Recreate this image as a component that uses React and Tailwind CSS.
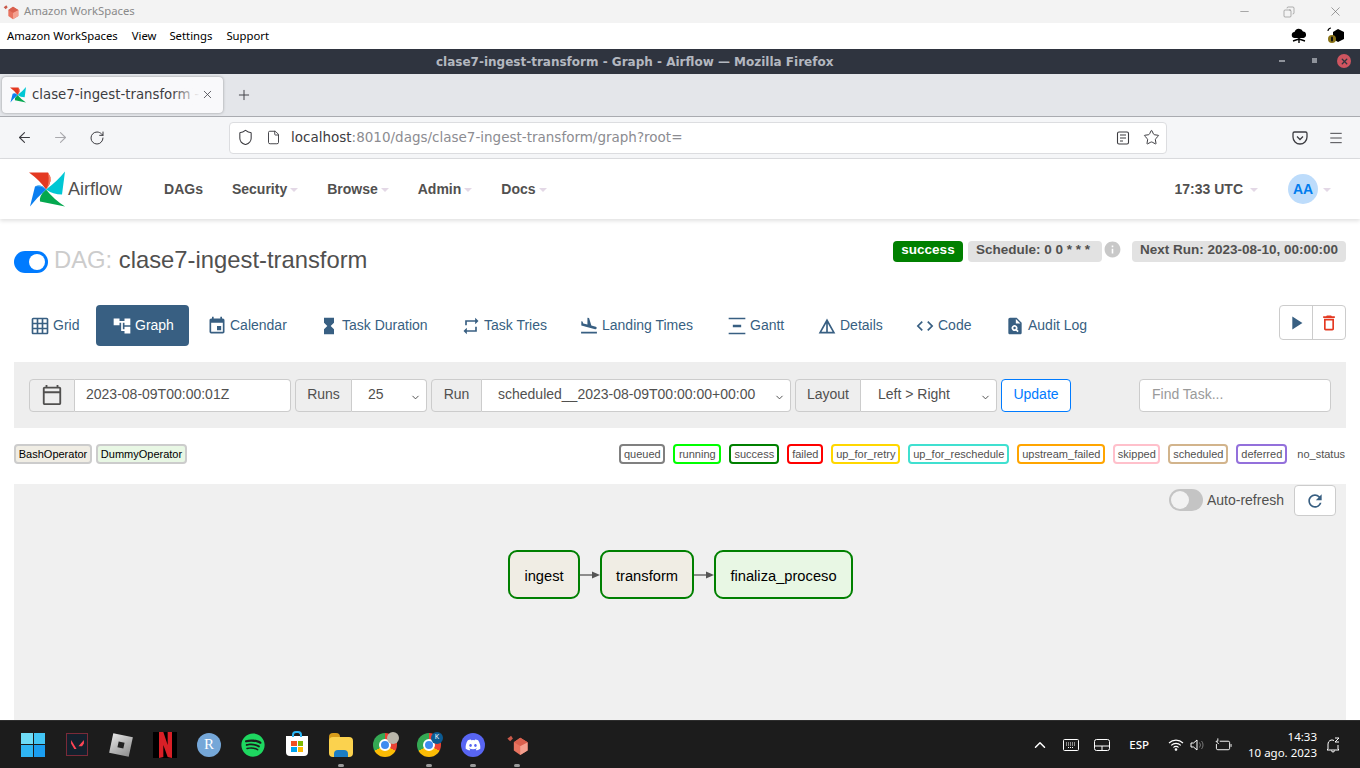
import React from 'react';
import { ArrowLeft, ArrowRight, RotateCw, Shield, File, Star, Menu, Minus, Copy, X, Plus, ChevronUp, ChevronDown } from 'lucide-react';
import {
  MdGridOn, MdAccountTree, MdEvent, MdHourglassFull, MdRepeat, MdFlightLand, MdVerticalDistribute,
  MdDetails, MdCode, MdPlagiarism, MdPlayArrow, MdDeleteOutline, MdRefresh, MdInfo, MdOutlineCalendarToday,
} from 'react-icons/md';
import { FaSpotify, FaDiscord } from 'react-icons/fa';

const Pinwheel = ({ className }) => (
  <svg viewBox="0 0 36 36" className={className}>
    <path d="M0 1 L19 1 Q25 9 17 18 Q11 9 0 1Z" fill="#e43921" />
    <path d="M19 1 Q25 9 17 18 Q21 12 19 1Z" fill="#f47a5f" />
    <path d="M36 0 L33 23 Q24 23 17 18 Q28 10 36 0Z" fill="#00c7d4" />
    <path d="M36 35 L11 30 Q10 24 17 18 Q25 28 36 35Z" fill="#04a84f" />
    <path d="M1 35 L6 15 Q12 12 17 18 Q8 26 1 35Z" fill="#0b7ff0" />
    <path d="M6 15 Q12 12 17 18 Q12 14 6 15Z" fill="#4fb3ee" />
  </svg>
);

const WorkspacesCube = ({ className }) => (
  <svg viewBox="0 0 24 24" className={className}>
    <path d="M8 9l7-5 8 5v9l-8 5-7-5z" fill="#e8735f" />
    <path d="M15 23V13l8-4v9z" fill="#f4a08f" />
    <path d="M8 9l7 4 8-4-8-5z" fill="#d9604e" />
    <path d="M1 5l4-3 2 3-3 3z" fill="#c9594a" />
  </svg>
);

const navItems = [
  { label: 'DAGs', caret: false, cls: 'ml-[42px]' },
  { label: 'Security', caret: true, cls: 'ml-[29px]' },
  { label: 'Browse', caret: true, cls: 'ml-[29px]' },
  { label: 'Admin', caret: true, cls: 'ml-[29px]' },
  { label: 'Docs', caret: true, cls: 'ml-[29px]' },
];

const tabs = [
  { label: 'Grid', Icon: MdGridOn, w: 'w-[82px] pl-[16px]' },
  { label: 'Graph', Icon: MdAccountTree, active: true, w: 'w-[93px] pl-[16px]' },
  { label: 'Calendar', Icon: MdEvent, w: 'w-[114px] pl-[18px]' },
  { label: 'Task Duration', Icon: MdHourglassFull, w: 'w-[142px] pl-[16px]' },
  { label: 'Task Tries', Icon: MdRepeat, w: 'w-[118px] pl-[16px]' },
  { label: 'Landing Times', Icon: MdFlightLand, w: 'w-[148px] pl-[16px]' },
  { label: 'Gantt', Icon: MdVerticalDistribute, w: 'w-[90px] pl-[16px]' },
  { label: 'Details', Icon: MdDetails, w: 'w-[98px] pl-[16px]' },
  { label: 'Code', Icon: MdCode, w: 'w-[90px] pl-[16px]' },
  { label: 'Audit Log', Icon: MdPlagiarism, w: 'w-[114px] pl-[16px]' },
];

const states = [
  { label: 'queued', cls: 'w-[46px] border-[#808080]' },
  { label: 'running', cls: 'w-[48px] border-[#00ff00]' },
  { label: 'success', cls: 'w-[50px] border-[#008000]' },
  { label: 'failed', cls: 'w-[36px] border-[#ff0000]' },
  { label: 'up_for_retry', cls: 'w-[69px] border-[#ffd700]' },
  { label: 'up_for_reschedule', cls: 'w-[101px] border-[#40e0d0]' },
  { label: 'upstream_failed', cls: 'w-[88px] border-[#ffa500]' },
  { label: 'skipped', cls: 'w-[47px] border-[#ffc0cb]' },
  { label: 'scheduled', cls: 'w-[60px] border-[#d2b48c]' },
  { label: 'deferred', cls: 'w-[51px] border-[#9370db]' },
];

const Caret = ({ className = 'ml-[3px]' }) => (
  <span className={`mt-[2px] inline-block border-x-[4px] border-t-[4px] border-x-transparent border-t-[#e3d8e6] ${className}`} />
);

const Addon = ({ children, className = '' }) => (
  <div className={`flex h-[33px] items-center justify-center rounded-l border border-[#ccc] bg-[#eee] pb-[1px] text-[14px] text-[#51504f] ${className}`}>
    {children}
  </div>
);

const Select = ({ value, className = '' }) => (
  <div className={`relative flex h-[33px] items-center rounded-r border border-l-0 border-[#ccc] bg-white pb-[1px] text-[14px] text-[#51504f] ${className}`}>
    {value}
    <ChevronDown size={11} strokeWidth={2} className="absolute right-[5px] top-[12px] text-[#444]" />
  </div>
);

const Edge = () => (
  <svg width="20" height="12" viewBox="0 0 20 12" className="shrink-0">
    <line x1="0" y1="6" x2="12" y2="6" stroke="#555" strokeWidth="1.3" />
    <path d="M12 2.5 L20 6 L12 9.5Z" fill="#555" />
  </svg>
);

const Node = ({ label, className = '' }) => (
  <div className={`flex h-[49px] items-center justify-center rounded-[9px] border-[2.5px] border-[#008000] pt-[3px] text-[14.700px] text-black ${className}`}>
    {label}
  </div>
);

const TaskIcon = ({ children, dot }) => (
  <div className="relative flex h-[48px] w-[44px] items-center justify-center">
    {children}
    {dot && <span className="absolute bottom-[2px] left-[19px] h-[3px] w-[6px] rounded-full bg-[#9a9a9a]" />}
  </div>
);

const Chrome = ({ badge }) => (
  <div className="relative h-[24px] w-[24px]">
    <div className="h-full w-full rounded-full bg-[conic-gradient(#ea4335_0deg_120deg,#fbbc05_120deg_240deg,#34a853_240deg_360deg)]" />
    <div className="absolute left-[6px] top-[6px] h-[12px] w-[12px] rounded-full border-2 border-white bg-[#3f8cf0]" />
    {badge}
  </div>
);

export default function App() {
  return (
    <div className="flex h-[768px] w-[1360px] flex-col overflow-hidden bg-white font-['Liberation_Sans',Arial,sans-serif]">
      {/* workspaces client chrome */}
      <div className="flex h-[23px] shrink-0 items-center bg-[#f3f3f3] pl-[3px] font-['Noto_Sans',sans-serif] text-[11.300px] text-[#8a8a8a]">
        <WorkspacesCube className="h-[16px] w-[16px]" />
        <span className="ml-[5px]">Amazon WorkSpaces</span>
        <div className="ml-auto flex items-center text-[#666]">
          <Minus size={13} strokeWidth={1} className="mr-[32px]" />
          <Copy size={12} strokeWidth={1} className="mr-[33px] -scale-x-100" />
          <X size={15} strokeWidth={1} className="mr-[17px]" />
        </div>
      </div>
      <div className="flex h-[26px] shrink-0 items-center bg-white pl-[7px] font-['Noto_Sans',sans-serif] text-[11.300px] text-black">
        <span>Amazon WorkSpaces</span>
        <span className="ml-[14px]">View</span>
        <span className="ml-[13px]">Settings</span>
        <span className="ml-[14px]">Support</span>
        <div className="ml-auto flex items-center">
          <svg viewBox="0 0 16 16" className="mr-[20px] h-[16px] w-[16px]">
            <path d="M4 10a3 3 0 0 1-.5-6A4.500 4.500 0 0 1 12 3.500a3.300 3.300 0 0 1 .5 6.500z" fill="#000" />
            <path d="M8 9v6M8 11L2 13M8 11l6 2" stroke="#000" strokeWidth="1.400" />
          </svg>
          <svg viewBox="0 0 18 18" className="mr-[15px] h-[18px] w-[18px]">
            <path d="M6 5l5-3 6 3v7l-6 3-5-3z" fill="#000" />
            <path d="M1 4c0-2 2-3 3-3" stroke="#000" strokeWidth="1.200" fill="none" />
            <circle cx="5" cy="12" r="4" fill="#8a7418" />
            <rect x="4" y="9.500" width="2" height="5" rx="1" fill="#111" />
          </svg>
        </div>
      </div>

      {/* firefox title bar */}
      <div className="relative flex h-[25px] shrink-0 items-center bg-[#2f343f] pl-[436px] font-['DejaVu_Sans',sans-serif] text-[12px] font-bold text-[#b4b8c0]">
        clase7-ingest-transform - Graph - Airflow — Mozilla Firefox
        <span className="absolute left-[1279px] top-[11px] h-[2px] w-[6px] bg-[#8f939b]" />
        <span className="absolute left-[1312px] top-[9px] h-[5px] w-[5px] bg-[#8f939b]" />
        <span className="absolute left-[1337px] top-[5px] flex h-[14px] w-[14px] items-center justify-center rounded-full bg-[#cf5560]">
          <X size={9} strokeWidth={3.500} className="text-[#2f343f]" />
        </span>
      </div>

      {/* tab strip */}
      <div className="flex h-[43px] shrink-0 items-center border-b border-[#a9abb0] bg-[#e4e6ea] pl-[2px] font-['DejaVu_Sans',sans-serif]">
        <div className="relative flex h-[36px] w-[221px] items-center rounded bg-[#f9f9fb] pl-[8px] shadow-[0_0_3px_rgba(0,0,0,0.35)]">
          <Pinwheel className="h-[16px] w-[16px] shrink-0" />
          <span className="ml-[6px] whitespace-nowrap text-[13.300px] text-[#3d3d42]">clase7-ingest-transform -</span>
          <span className="absolute left-[170px] top-0 h-full w-[28px] bg-linear-to-r from-transparent to-[#f9f9fb]" />
          <X size={13} strokeWidth={1.500} className="absolute left-[199px] top-[11px] text-[#44444a]" />
        </div>
        <Plus size={16} strokeWidth={1.500} className="ml-[13px] text-[#44444a]" />
      </div>

      {/* firefox toolbar */}
      <div className="flex h-[42px] shrink-0 items-center border-b border-[#dcdde0] bg-[#f5f6f8] text-[#3c3c41]">
        <ArrowLeft size={17} strokeWidth={1.500} className="ml-[16px]" />
        <ArrowRight size={17} strokeWidth={1.500} className="ml-[19px] text-[#a9a9ad]" />
        <RotateCw size={16} strokeWidth={1.500} className="ml-[20px]" />
        <div className="ml-[124px] flex h-[32px] w-[938px] items-center rounded border border-[#dcdde0] bg-white font-['DejaVu_Sans',sans-serif] text-[13.500px]">
          <Shield size={17} strokeWidth={1.500} className="ml-[7px]" />
          <File size={15} strokeWidth={1.500} className="ml-[12px]" />
          <span className="ml-[10px] text-[#3c3c41]">localhost<span className="text-[#8c8c91]">:8010/dags/clase7-ingest-transform/graph?root=</span></span>
          <svg viewBox="0 0 14 14" className="ml-auto h-[14px] w-[14px]" fill="none" stroke="#3c3c41" strokeWidth="1.100">
            <rect x="1.500" y="1" width="11" height="12" rx="1.500" />
            <path d="M4 4h6M4 7h6M4 10h3" />
          </svg>
          <Star size={17} strokeWidth={1.400} className="ml-[13px] mr-[6px]" />
        </div>
        <svg viewBox="0 0 16 16" className="ml-[125px] h-[16px] w-[16px]" fill="none" stroke="#3c3c41" strokeWidth="1.300">
          <path d="M2.500 2h11A1.500 1.500 0 0 1 15 3.500V7a7 7 0 0 1-14 0V3.500A1.500 1.500 0 0 1 2.500 2z" />
          <path d="M5 6.500l3 3 3-3" />
        </svg>
        <Menu size={16} strokeWidth={1.400} className="ml-[20px]" />
      </div>

      {/* airflow navbar */}
      <nav className="z-10 flex h-[60px] shrink-0 items-center bg-white pl-[29px] text-[14px] font-bold text-[#51504f] shadow-[0_2px_4px_rgba(0,0,0,0.12)]">
        <Pinwheel className="h-[37px] w-[36px]" />
        <span className="ml-[3px] text-[18px] font-normal">Airflow</span>
        {navItems.map((item) => (
          <div key={item.label} className={`flex items-center ${item.cls}`}>
            {item.label}
            {item.caret && <Caret />}
          </div>
        ))}
        <div className="ml-auto flex items-center">
          17:33 UTC
          <Caret className="ml-[7px]" />
        </div>
        <div className="ml-[30px] mr-[29px] flex items-center">
          <div className="flex h-[30px] w-[30px] items-center justify-center rounded-full bg-[#bddcfb] text-[#017cee]">AA</div>
          <Caret className="ml-[5px]" />
        </div>
      </nav>

      {/* page */}
      <main className="flex min-h-0 flex-1 flex-col px-[14px]">
        <div className="flex h-[86px] shrink-0 items-start justify-between pt-[22px]">
          <div className="mt-[6px] flex items-start">
            <div className="mt-[4px] flex h-[22px] w-[34px] items-center justify-end rounded-full bg-[#007bff] pr-[3px]">
              <span className="h-[16px] w-[16px] rounded-full bg-white" />
            </div>
            <h1 className="ml-[6px] text-[23.800px] leading-[26px] text-[#51504f]"><span className="text-[#ccc]">DAG:</span> clase7-ingest-transform</h1>
          </div>
          <div className="flex items-start text-[13.500px] font-bold text-[#51504f]">
            <span className="flex h-[21px] w-[70px] items-center justify-center rounded bg-[#008000] pb-[2px] text-white">success</span>
            <span className="ml-[5px] flex h-[21px] w-[134px] items-center rounded bg-[#e2e2e2] pb-[2px] pl-[8px]">Schedule: 0 0 * * *</span>
            <MdInfo size={19} className="ml-[1px] mt-[-1px] text-[#c8c8c8]" />
            <span className="ml-[10px] flex h-[21px] w-[214px] items-center justify-center rounded bg-[#e2e2e2] pb-[2px]">Next Run: 2023-08-10, 00:00:00</span>
          </div>
        </div>

        <div className="flex h-[41px] shrink-0 items-start justify-between text-[14px] text-[#385f82]">
          <div className="flex">
            {tabs.map(({ label, Icon, active, w }) => (
              <div key={label} className={`flex h-[41px] items-center justify-start rounded ${w} ${active ? 'bg-[#385f82] text-white' : ''}`}>
                <Icon size={20} className="mr-[3px] shrink-0" />
                {label}
              </div>
            ))}
          </div>
          <div className="flex h-[35px] w-[67px] rounded border border-[#ccc] bg-white">
            <div className="flex w-[33px] items-center justify-center border-r border-[#ccc]"><MdPlayArrow size={22} /></div>
            <div className="flex flex-1 items-center justify-center text-[#e43921]"><MdDeleteOutline size={20} /></div>
          </div>
        </div>

        {/* filter bar */}
        <div className="mt-[16px] flex h-[66px] shrink-0 items-center bg-[#eee] pl-[15px] pr-[15px]">
          <Addon className="w-[46px]"><MdOutlineCalendarToday size={22} /></Addon>
          <div className="flex h-[33px] w-[216px] items-center rounded-r border border-l-0 border-[#ccc] bg-white pb-[1px] pl-[11px] text-[14px] text-[#51504f]">2023-08-09T00:00:01Z</div>
          <Addon className="ml-[4px] w-[57px]">Runs</Addon>
          <Select value="25" className="w-[75px] pl-[16px]" />
          <Addon className="ml-[4px] w-[51px]">Run</Addon>
          <Select value="scheduled__2023-08-09T00:00:00+00:00" className="w-[309px] pl-[16px]" />
          <Addon className="ml-[4px] w-[66px]">Layout</Addon>
          <Select value="Left > Right" className="w-[136px] pl-[17px]" />
          <div className="ml-[4px] flex h-[33px] w-[70px] items-center justify-center rounded border border-[#007bff] bg-white pb-[1px] text-[14px] text-[#007bff]">Update</div>
          <div className="ml-auto flex h-[33px] w-[192px] items-center rounded border border-[#ccc] bg-white pb-[1px] pl-[12px] text-[14px] text-[#9a9a9a]">Find Task...</div>
        </div>

        {/* legend */}
        <div className="mt-[16px] flex h-[20px] shrink-0 items-center justify-between text-[11px] text-[#51504f]">
          <div className="flex gap-[4px] text-black">
            <span className="flex h-[20px] w-[78px] items-center justify-center rounded border-2 border-[#ccc] bg-[#f0ede4]">BashOperator</span>
            <span className="flex h-[20px] w-[91px] items-center justify-center rounded border-2 border-[#ccc] bg-[#e8f7e4]">DummyOperator</span>
          </div>
          <div className="flex items-center gap-[8px]">
            {states.map((s) => (
              <span key={s.label} className={`flex h-[20px] items-center justify-center rounded border-2 ${s.cls}`}>{s.label}</span>
            ))}
            <span className="ml-[2px] mr-[1px]">no_status</span>
          </div>
        </div>

        {/* graph */}
        <div className="mt-[20px] min-h-0 flex-1 bg-[#f0f0f0]">
          <div className="flex items-center justify-end pr-[10px]">
            <div className="flex h-[22px] w-[34px] items-center rounded-full bg-[#c4c4c4] pl-[2px]">
              <span className="h-[18px] w-[18px] rounded-full bg-[#f2f2f2]" />
            </div>
            <span className="ml-[4px] text-[14px] text-[#51504f]">Auto-refresh</span>
            <div className="ml-[10px] mt-[1px] flex h-[31px] w-[42px] items-center justify-center rounded-sm border border-[#ccc] bg-white text-[#385f82]">
              <MdRefresh size={20} />
            </div>
          </div>
          <div className="ml-[494px] mt-[34px] flex items-center">
            <Node label="ingest" className="w-[72px] bg-[#f0ede4]" />
            <Edge />
            <Node label="transform" className="w-[94px] bg-[#f0ede4]" />
            <Edge />
            <Node label="finaliza_proceso" className="w-[139px] bg-[#e8f7e4]" />
          </div>
        </div>
      </main>

      {/* windows taskbar */}
      <footer className="flex h-[48px] shrink-0 items-center border-t border-[#2e2e2e] bg-[#1c1c1c] pl-[11px] font-['Noto_Sans',sans-serif] text-white">
        <TaskIcon>
          <div className="grid h-[24px] w-[24px] grid-cols-2 gap-[1px]">
            <span className="bg-[#6fdcf7]" /><span className="bg-[#42c5f5]" />
            <span className="bg-[#2fb5f3]" /><span className="bg-[#1a9df0]" />
          </div>
        </TaskIcon>
        <TaskIcon>
          <div className="flex h-[23px] w-[22px] items-center justify-center border border-[#7a2a38] bg-[#14202c]">
            <svg viewBox="0 0 14 12" className="h-[11px] w-[13px]"><path d="M0 1l6 10H3.500L0 5zM14 1L8 8h4l2-3z" fill="#ff4655" /></svg>
          </div>
        </TaskIcon>
        <TaskIcon>
          <div className="flex h-[20px] w-[20px] rotate-[12deg] items-center justify-center bg-linear-to-br from-[#e6e6e6] to-[#8d8d8d]">
            <span className="h-[6px] w-[6px] bg-[#222]" />
          </div>
        </TaskIcon>
        <TaskIcon>
          <div className="flex h-[26px] w-[24px] items-center justify-center bg-black">
            <svg viewBox="0 0 12 24" className="h-[26px] w-[13px]"><path d="M0 0h4l4 12V0h4v24l-4-1-4-11v11l-4 1z" fill="#d81f26" /></svg>
          </div>
        </TaskIcon>
        <TaskIcon>
          <div className="flex h-[24px] w-[24px] items-center justify-center rounded-full bg-[#75a7d8] font-['Liberation_Serif',serif] text-[15px] text-white">R</div>
        </TaskIcon>
        <TaskIcon><FaSpotify size={24} className="text-[#1ed760]" /></TaskIcon>
        <TaskIcon>
          <div className="relative mt-[3px] grid h-[20px] w-[22px] grid-cols-2 content-center justify-center gap-[1px] rounded-b bg-white px-[5px] py-[3px]">
            <span className="absolute left-[6px] top-[-5px] h-[6px] w-[10px] rounded-t border-2 border-b-0 border-[#29b6f6]" />
            <span className="h-[5px] bg-[#f25022]" /><span className="h-[5px] bg-[#7fba00]" />
            <span className="h-[5px] bg-[#00a4ef]" /><span className="h-[5px] bg-[#ffb900]" />
          </div>
        </TaskIcon>
        <TaskIcon dot>
          <div className="relative h-[24px] w-[24px]">
            <div className="absolute left-0 top-0 h-[8px] w-[11px] rounded-t-sm bg-[#d79c1b]" />
            <div className="absolute left-0 top-[4px] h-[20px] w-[24px] rounded-sm bg-[#fbd24e]" />
            <div className="absolute bottom-0 left-[5px] h-[7px] w-[14px] rounded-t-sm bg-[#1b7dc4]" />
          </div>
        </TaskIcon>
        <TaskIcon>
          <Chrome badge={<span className="absolute right-[-2px] top-[-1px] h-[12px] w-[12px] rounded-full bg-[#b9b6aa]" />} />
        </TaskIcon>
        <TaskIcon dot>
          <Chrome badge={<span className="absolute right-[-2px] top-[-1px] flex h-[12px] w-[12px] items-center justify-center rounded-full bg-[#0b5b93] text-[7px] text-white">K</span>} />
        </TaskIcon>
        <TaskIcon dot>
          <div className="flex h-[24px] w-[24px] items-center justify-center rounded-full bg-[#5865f2]"><FaDiscord size={16} /></div>
        </TaskIcon>
        <TaskIcon dot><WorkspacesCube className="h-[22px] w-[23px]" /></TaskIcon>

        <div className="ml-auto flex items-center">
          <ChevronUp size={18} strokeWidth={2} />
          <svg viewBox="0 0 16 12" className="ml-[14px] h-[12px] w-[16px]" fill="none" stroke="#fff">
            <rect x="0.500" y="0.500" width="15" height="11" rx="1" />
            <path d="M3 4h10M3 6h10M5 8.500h6" strokeDasharray="1 1" />
          </svg>
          <svg viewBox="0 0 16 12" className="ml-[15px] h-[12px] w-[16px]" fill="none" stroke="#fff">
            <rect x="0.500" y="0.500" width="15" height="11" rx="2" />
            <path d="M0.500 7h15M8 7v4.500" />
          </svg>
          <span className="ml-[19px] text-[11.500px] font-medium">ESP</span>
          <svg viewBox="0 0 16 12" className="ml-[19px] h-[13px] w-[16px]" fill="none" stroke="#fff" strokeWidth="1.100">
            <path d="M1 4.500a10 10 0 0 1 14 0M3.200 6.800a7 7 0 0 1 9.600 0M5.400 9a3.500 3.500 0 0 1 5.200 0" />
            <circle cx="8" cy="11" r="0.800" fill="#fff" />
          </svg>
          <svg viewBox="0 0 16 14" className="ml-[6px] h-[14px] w-[16px]" fill="none" stroke="#fff">
            <path d="M1 5v4h2.500L7 12V2L3.500 5z" />
            <path d="M9.500 4.500a4 4 0 0 1 0 5M11.500 3a6 6 0 0 1 0 8" stroke="#777" />
          </svg>
          <svg viewBox="0 0 18 14" className="ml-[9px] h-[14px] w-[17px]" fill="none" stroke="#fff">
            <path d="M5 3h9a1.500 1.500 0 0 1 1.500 1.500v6A1.500 1.500 0 0 1 14 12H3a1.500 1.500 0 0 1-1.500-1.500V6" />
            <path d="M17 6v3" />
            <path d="M3 0v3L1 3l3 3" />
          </svg>
          <div className="ml-[5px] flex w-[80px] flex-col items-end text-[11.500px] leading-[16px]">
            <span>14:33</span>
            <span className="whitespace-nowrap">10 ago. 2023</span>
          </div>
          <svg viewBox="0 0 16 16" className="ml-[8px] mr-[19px] h-[16px] w-[16px]" fill="none" stroke="#fff">
            <path d="M3 12V7a4 4 0 0 1 6-3.500M13 8v4l1 1H2l1-1M6.500 13.500a1.500 1.500 0 0 0 3 0" />
            <path d="M10 1h4l-4 4h4" />
          </svg>
        </div>
      </footer>
    </div>
  );
}
